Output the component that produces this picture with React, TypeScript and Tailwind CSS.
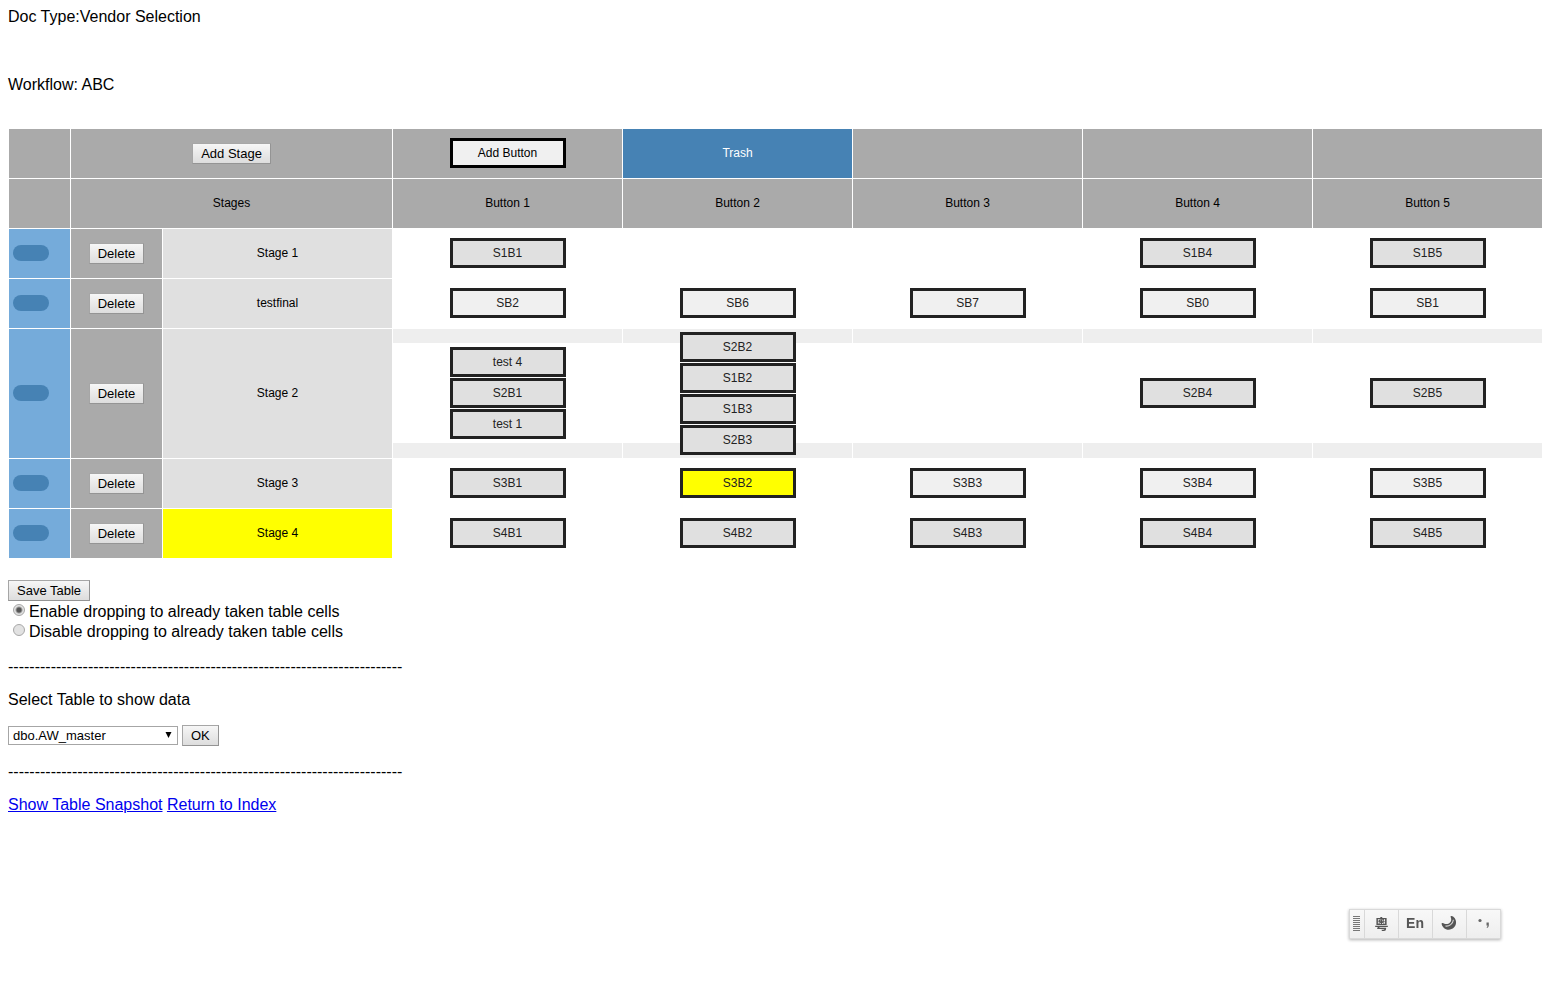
type Box = { label: string; tone?: "grey" | "light" | "yellow" };
type Stage = { name: string; active?: boolean; tall?: boolean; cells: Box[][] };

const g = (label: string): Box => ({ label, tone: "grey" });
const l = (label: string): Box => ({ label, tone: "light" });

const stages: Stage[] = [
  { name: "Stage 1", cells: [[g("S1B1")], [], [], [g("S1B4")], [g("S1B5")]] },
  { name: "testfinal", cells: [[l("SB2")], [l("SB6")], [l("SB7")], [l("SB0")], [l("SB1")]] },
  {
    name: "Stage 2",
    tall: true,
    cells: [
      [g("test 4"), g("S2B1"), g("test 1")],
      [g("S2B2"), g("S1B2"), g("S1B3"), g("S2B3")],
      [],
      [g("S2B4")],
      [g("S2B5")],
    ],
  },
  {
    name: "Stage 3",
    cells: [[g("S3B1")], [{ label: "S3B2", tone: "yellow" }], [l("S3B3")], [l("S3B4")], [l("S3B5")]],
  },
  {
    name: "Stage 4",
    active: true,
    cells: [[g("S4B1")], [g("S4B2")], [g("S4B3")], [g("S4B4")], [g("S4B5")]],
  },
];

const tones = { grey: "bg-[#e0e0e0]", light: "bg-[#f0f0f0]", yellow: "bg-[#ffff00]" };

function PushButton({ children }: { children: string }) {
  return (
    <button
      type="button"
      className="h-[21px] border border-[#a6a6a6] border-r-[#949494] border-b-[#949494] bg-linear-to-b from-[#f6f6f6] to-[#dddddd] px-2 text-[13px] leading-[19px] text-black"
    >
      {children}
    </button>
  );
}

function Chip({ box }: { box: Box }) {
  return (
    <div
      className={`flex h-[30px] w-[116px] shrink-0 cursor-move items-center justify-center border-3 border-[#222] text-[#222] ${tones[box.tone ?? "grey"]}`}
    >
      {box.label}
    </div>
  );
}

function StageRow({ stage }: { stage: Stage }) {
  return (
    <tr className={stage.tall ? "h-[130px]" : "h-[50px]"}>
      <td className="border border-white bg-[#75abda] pb-px">
        <div className="ml-1 h-4 w-9 cursor-move rounded-full bg-[#4682b4]" />
      </td>
      <td className="border border-white bg-[#aaa] text-center">
        <PushButton>Delete</PushButton>
      </td>
      <td className={`border border-white pb-px text-center ${stage.active ? "bg-[#ffff00]" : "bg-[#e0e0e0]"}`}>
        {stage.name}
      </td>
      {stage.cells.map((boxes, i) => (
        <td key={i} className={`border border-white pb-px ${stage.tall ? "bg-[#eee]" : "bg-white"}`}>
          <div
            className={`flex flex-col items-center justify-center gap-px bg-white ${stage.tall ? "h-[100px]" : ""}`}
          >
            {boxes.map((box) => (
              <Chip key={box.label} box={box} />
            ))}
          </div>
        </td>
      ))}
    </tr>
  );
}

function InputBar() {
  return (
    <div className="fixed right-[50px] bottom-[49px] flex h-[30px] divide-x divide-[#d9d9d9] border border-[#d9d9d9] bg-linear-to-b from-[#f8f8f8] to-[#eeeeee] text-[#555] shadow-[0_1px_3px_rgba(0,0,0,0.3)]">
      <div className="flex w-[15px] items-center justify-center pr-px pb-px">
        <svg width="7" height="15" viewBox="0 0 7 15" shapeRendering="crispEdges" aria-hidden="true">
          <path d="M0 .5h7M0 2.5h7M0 4.5h7M0 6.5h7M0 8.5h7M0 10.5h7M0 12.5h7M0 14.5h7" stroke="#777" />
        </svg>
      </div>
      <button
        type="button"
        className="w-[34px] pb-[2px] font-['Noto_Sans_CJK_TC',sans-serif] text-[14px] leading-[26px] font-bold"
      >
        粵
      </button>
      <button type="button" className="w-[34px] pr-px pb-[2px] text-[14px] leading-[26px] font-bold">
        En
      </button>
      <button type="button" aria-label="Half width" className="flex w-[34px] items-center justify-center pr-px pb-[2px]">
        <svg width="16" height="16" viewBox="0 0 16 16" aria-hidden="true">
          <path
            d="M9.6 1.2C10.8 .6 12.4 1.400 13.600 3C15.800 6 15.500 10 12.900 12.600C10.200 15.300 5.600 15.500 2.900 13C1.500 11.700 .6 9.900 .6 8.600C1.200 7.600 2.400 8.300 3.400 8.700C5.400 9.500 7.600 9 9 7.500C10.400 6 10.500 4.200 9.900 2.700C9.700 2.200 9.500 1.700 9.600 1.200Z"
            fill="#555"
          />
          <path d="M4.400 11C8.200 11.600 12 8.900 12.400 4.800" fill="none" stroke="#d4d4d4" strokeWidth="1.100" />
        </svg>
      </button>
      <button type="button" aria-label="Punctuation" className="flex w-[33px] items-center justify-center pb-px">
        <svg width="12" height="12" viewBox="0 0 12 12" aria-hidden="true">
          <circle cx="2" cy="2.500" r="1.600" fill="#666" />
          <path d="M8.500 4.500h2.300v3q0 1.800-1.700 2.500l-.5-.8q1-.5 1-1.700H8.500z" fill="#666" />
        </svg>
      </button>
    </div>
  );
}

const radioClass =
  "mt-[3px] mr-1 ml-[5px] size-3 shrink-0 self-start appearance-none rounded-full border border-[#a8a8a8] bg-[#e2e2e2] checked:bg-[radial-gradient(circle,#555_0,#555_2px,#e2e2e2_4px)]";

export default function App() {
  const rule = "-".repeat(74);
  return (
    <main className="bg-white p-2 font-['Liberation_Sans',Arial,sans-serif] text-[16px] leading-[18px] text-black">
      <p>Doc Type:Vendor Selection</p>
      <p className="mt-[50px]">Workflow: ABC</p>

      <table className="mt-[34px] w-full table-fixed border-collapse text-[12px] leading-[14px]">
        <colgroup>
          <col className="w-[62px]" />
          <col className="w-[92px]" />
          <col />
          <col />
          <col />
          <col />
          <col />
          <col />
        </colgroup>
        <tbody>
          <tr className="h-[50px] bg-[#aaa] text-center">
            <td className="border border-white" />
            <td colSpan={2} className="border border-white">
              <PushButton>Add Stage</PushButton>
            </td>
            <td className="border border-white pb-px">
              <div className="mx-auto flex h-[30px] w-[116px] cursor-move items-center justify-center border-3 border-black bg-[#f0f0f0]">
                Add Button
              </div>
            </td>
            <td className="border border-white bg-[#4682b4] pb-px text-white">Trash</td>
            <td className="border border-white" />
            <td className="border border-white" />
            <td className="border border-white" />
          </tr>
          <tr className="h-[50px] bg-[#aaa] text-center">
            <td className="border border-white" />
            <td colSpan={2} className="border border-white pb-px">
              Stages
            </td>
            {[1, 2, 3, 4, 5].map((n) => (
              <td key={n} className="border border-white pb-px">
                Button {n}
              </td>
            ))}
          </tr>
          {stages.map((stage) => (
            <StageRow key={stage.name} stage={stage} />
          ))}
        </tbody>
      </table>

      <div className="mt-[21px] flex">
        <PushButton>Save Table</PushButton>
      </div>
      <label className="flex h-5 w-fit items-end">
        <input type="radio" name="dropping" defaultChecked className={radioClass} />
        Enable dropping to already taken table cells
      </label>
      <label className="flex h-5 w-fit items-end">
        <input type="radio" name="dropping" className={radioClass} />
        Disable dropping to already taken table cells
      </label>

      <p className="mt-4 leading-5">{rule}</p>
      <p className="mt-[14px]">
        <label htmlFor="table-name">Select Table to show data</label>
      </p>
      <div className="mt-4 flex items-center gap-1">
        <div className="relative">
          <select
            id="table-name"
            defaultValue="dbo.AW_master"
            className="block h-[19px] w-[170px] appearance-none border border-[#a6a6a6] bg-white pl-1 text-[13px] leading-[17px]"
          >
            <option>dbo.AW_master</option>
          </select>
          <svg
            className="pointer-events-none absolute top-[6px] right-[6px]"
            width="7"
            height="7"
            viewBox="0 0 7 7"
            aria-hidden="true"
          >
            <path d="M.5 0h6L3.500 6z" fill="#000" />
          </svg>
        </div>
        <PushButton>OK</PushButton>
      </div>
      <p className="mt-4 leading-5">{rule}</p>
      <p className="mt-[14px] text-[#0000ee]">
        <a href="#snapshot" className="underline">
          Show Table Snapshot
        </a>{" "}
        <a href="#index" className="underline">
          Return to Index
        </a>
      </p>
      <InputBar />
    </main>
  );
}
